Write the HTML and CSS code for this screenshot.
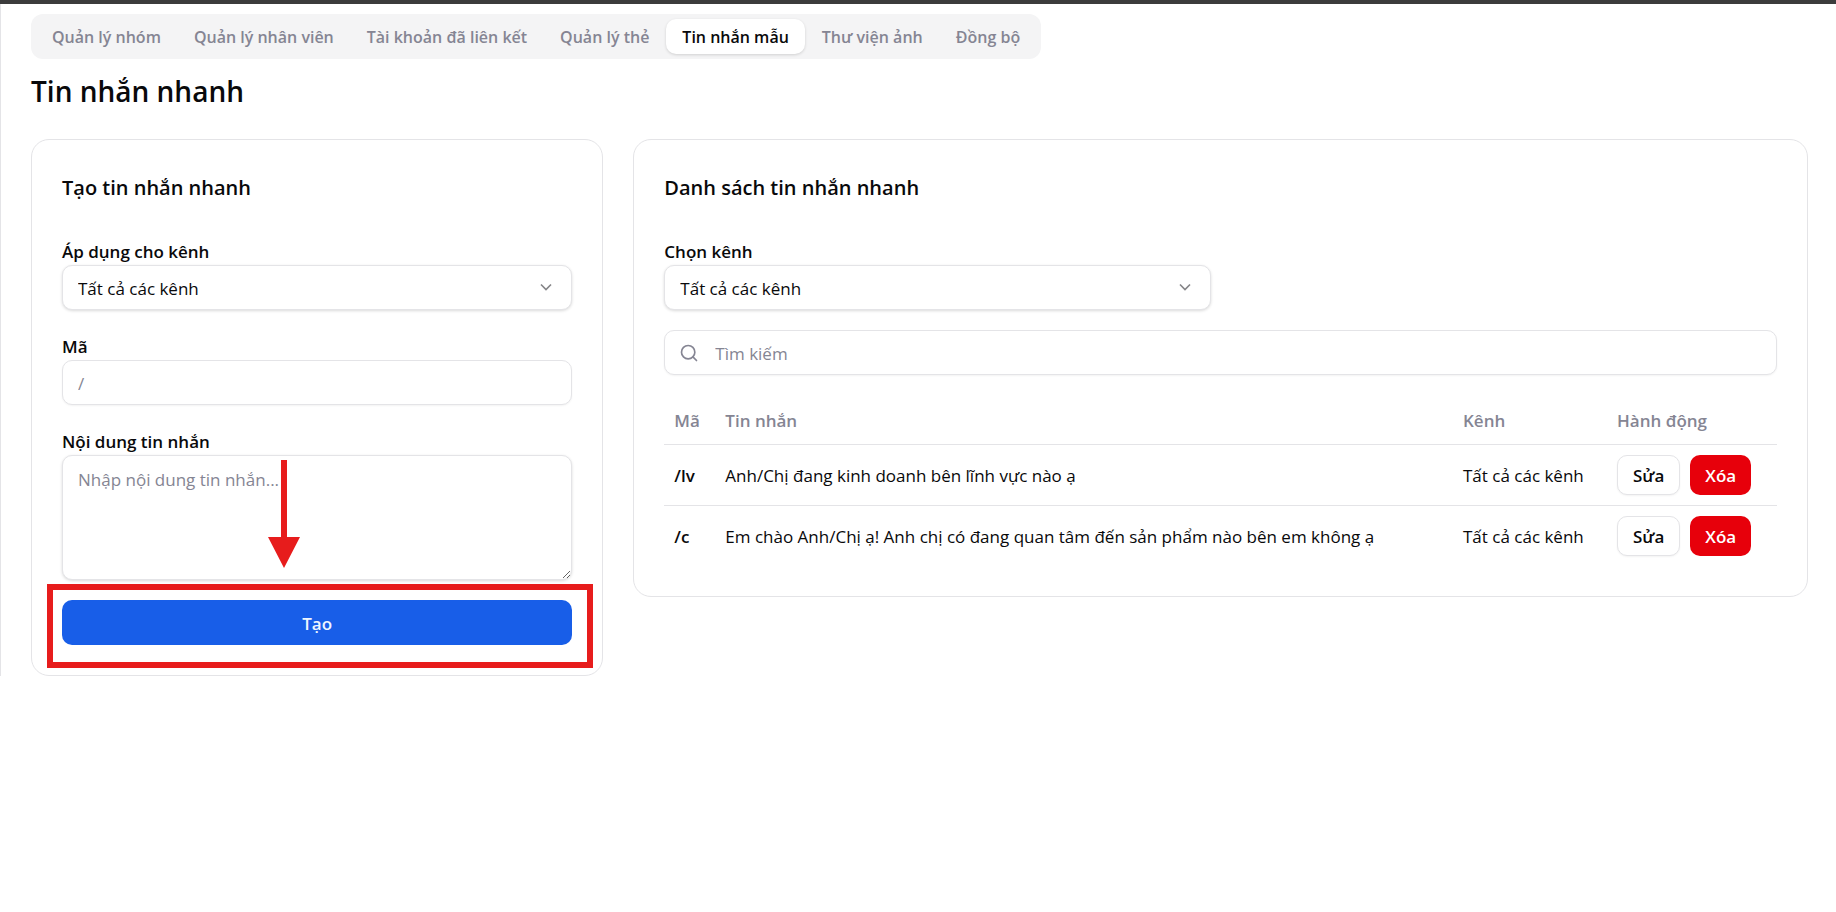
FILE: index.html
```html
<!DOCTYPE html>
<html lang="vi">
<head>
    <meta charset="UTF-8">
    <meta name="viewport" content="width=device-width, initial-scale=1.0">
    <title>Tin nhắn nhanh</title>
    <link rel="stylesheet" href="styles.css">
</head>
<body>
<div class="page">
    <nav class="tabs">
        <button class="tab" type="button">Quản lý nhóm</button>
        <button class="tab" type="button">Quản lý nhân viên</button>
        <button class="tab" type="button">Tài khoản đã liên kết</button>
        <button class="tab" type="button">Quản lý thẻ</button>
        <button class="tab active" type="button">Tin nhắn mẫu</button>
        <button class="tab" type="button">Thư viện ảnh</button>
        <button class="tab" type="button">Đồng bộ</button>
    </nav>
    <h1>Tin nhắn nhanh</h1>
    <main class="columns">
        <section class="card">
            <h2>Tạo tin nhắn nhanh</h2>
            <form>
                <div class="field">
                    <label for="channel">Áp dụng cho kênh</label>
                    <div class="select-wrap">
                        <select id="channel" class="control raised">
                            <option>Tất cả các kênh</option>
                        </select>
                        <svg class="chevron" viewBox="0 0 24 24"><path d="m6 9 6 6 6-6"/></svg>
                    </div>
                </div>
                <div class="field">
                    <label for="code">Mã</label>
                    <input type="text" id="code" class="control" placeholder="/">
                </div>
                <div class="field message-field">
                    <label for="content">Nội dung tin nhắn</label>
                    <textarea id="content" class="control raised" placeholder="Nhập nội dung tin nhắn..."></textarea>
                    <svg class="arrow" viewBox="0 0 32 108"><path d="M13 0h6v77h13L16 108 0 77h13z"/></svg>
                </div>
                <div class="submit">
                    <button class="create-btn" type="button">Tạo</button>
                    <div class="highlight"></div>
                </div>
            </form>
        </section>
        <section class="card list-card">
            <h2>Danh sách tin nhắn nhanh</h2>
            <div class="filter">
                <label for="filterChannel">Chọn kênh</label>
                <div class="select-wrap">
                    <select id="filterChannel" class="control raised">
                        <option>Tất cả các kênh</option>
                    </select>
                    <svg class="chevron" viewBox="0 0 24 24"><path d="m6 9 6 6 6-6"/></svg>
                </div>
            </div>
            <div class="control search">
                <svg class="search-icon" viewBox="0 0 24 24"><circle cx="11" cy="11" r="8"/><path d="m21 21-4.3-4.3"/></svg>
                <input type="text" placeholder="Tìm kiếm" aria-label="Tìm kiếm">
            </div>
            <table>
                <thead>
                <tr>
                    <th class="col-code">Mã</th>
                    <th>Tin nhắn</th>
                    <th class="col-channel">Kênh</th>
                    <th class="col-action">Hành động</th>
                </tr>
                </thead>
                <tbody>
                <tr>
                    <td class="code">/lv</td>
                    <td>Anh/Chị đang kinh doanh bên lĩnh vực nào ạ</td>
                    <td>Tất cả các kênh</td>
                    <td class="action-cell">
                        <div class="actions">
                            <button class="edit-btn" type="button">Sửa</button>
                            <button class="delete-btn" type="button">Xóa</button>
                        </div>
                    </td>
                </tr>
                <tr>
                    <td class="code">/c</td>
                    <td>Em chào Anh/Chị ạ! Anh chị có đang quan tâm đến sản phẩm nào bên em không ạ</td>
                    <td>Tất cả các kênh</td>
                    <td class="action-cell">
                        <div class="actions">
                            <button class="edit-btn" type="button">Sửa</button>
                            <button class="delete-btn" type="button">Xóa</button>
                        </div>
                    </td>
                </tr>
                </tbody>
            </table>
        </section>
    </main>
</div>
</body>
</html>
```
FILE: styles.css
```css
* {
    box-sizing: border-box;
}

body {
    margin: 0;
    border-top: 4px solid #3c3c3c;
    background: #fff;
    color: #09090b;
    font-family: "Open Sans", "Noto Sans", sans-serif;
    font-size: 17px;
    line-height: 25px;
}

button,
input,
select,
textarea {
    font: inherit;
    color: inherit;
}

button {
    border: none;
    border-radius: 10px;
    font-weight: 600;
    cursor: pointer;
}

.page {
    border-left: 1px solid #e4e4e7;
    padding: 10px 28px 0 30px;
}

.tabs {
    display: flex;
    gap: 1px;
    width: fit-content;
    padding: 5px;
    border-radius: 12px;
    background: #f4f4f5;
}

.tab {
    height: 35px;
    padding: 1px 16px 0;
    background: none;
    color: #858593;
    font-size: 16px;
}

.tab.active {
    background: #fff;
    color: #09090b;
    box-shadow: 0 1px 3px rgba(0, 0, 0, 0.15);
}

h1 {
    margin: 12px 0 28px;
    font-size: 28px;
    line-height: 40px;
    font-weight: 600;
}

h2 {
    margin: 0 0 35px;
    font-size: 20px;
    line-height: 35px;
    font-weight: 600;
}

.columns {
    display: grid;
    grid-template-columns: repeat(3, minmax(0, 1fr));
    gap: 30px;
    align-items: start;
}

.card {
    padding: 30px;
    border: 1px solid #e4e4e7;
    border-radius: 18px;
}

.list-card {
    grid-column: span 2;
}

.field {
    margin-bottom: 25px;
}

label {
    display: block;
    margin-bottom: 2px;
    line-height: 23px;
    font-weight: 600;
}

.control {
    display: block;
    width: 100%;
    height: 45px;
    padding: 1px 15px 0;
    border: 1px solid #e4e4e7;
    border-radius: 10px;
    background: #fff;
    box-shadow: 0 1px 2px rgba(0, 0, 0, 0.05);
    outline: none;
}

.raised {
    box-shadow: 0 1px 3px rgba(0, 0, 0, 0.15);
}

select.control {
    appearance: none;
}

textarea.control {
    height: 125px;
    padding: 11px 15px;
    resize: vertical;
}

::placeholder {
    color: #858593;
    opacity: 1;
}

.select-wrap,
.message-field,
.submit {
    position: relative;
}

.message-field {
    margin-bottom: 20px;
}

.chevron {
    position: absolute;
    top: 12px;
    right: 16px;
    width: 20px;
    height: 20px;
    fill: none;
    stroke: #858588;
    stroke-width: 2;
    pointer-events: none;
}

.create-btn {
    display: block;
    width: 100%;
    height: 45px;
    padding: 1px 15px 0;
    background: #185ee8;
    color: #eff6ff;
}

/* Guide marks drawn over the form */
.arrow {
    position: absolute;
    top: 30px;
    left: 206px;
    width: 32px;
    height: 108px;
    fill: #e71c1c;
    pointer-events: none;
}

.highlight {
    position: absolute;
    top: -16px;
    right: -21px;
    bottom: -23px;
    left: -15px;
    border: 6px solid #e71c1c;
    pointer-events: none;
}

.filter {
    width: calc(50% - 10px);
    margin-bottom: 20px;
}

.search {
    display: flex;
    align-items: center;
    gap: 16px;
    margin-bottom: 20px;
    padding: 0 14px;
}

.search input {
    flex: 1;
    padding: 1px 0 0;
    border: none;
    background: none;
    outline: none;
}

.search-icon {
    width: 20px;
    height: 20px;
    fill: none;
    stroke: #858593;
    stroke-width: 2;
    stroke-linecap: round;
}

table {
    width: 100%;
    border-collapse: collapse;
}

th,
td {
    padding: 2px 10px 0;
    text-align: left;
}

th {
    height: 49px;
    color: #858593;
    font-weight: 600;
}

td {
    height: 61px;
}

tbody tr {
    border-top: 1px solid #e4e4e7;
}

.col-code {
    width: 51px;
}

.col-channel {
    width: 154px;
}

.col-action {
    width: 170px;
}

.code {
    font-weight: 600;
}

.action-cell {
    padding-top: 0;
}

.actions {
    display: flex;
    gap: 10px;
}

.actions button {
    height: 40px;
    padding: 1px 15px 0;
}

.edit-btn {
    border: 1px solid #e4e4e7;
    background: #fff;
    box-shadow: 0 1px 2px rgba(0, 0, 0, 0.05);
}

.delete-btn {
    background: #e7000b;
    color: #fff;
}
```
